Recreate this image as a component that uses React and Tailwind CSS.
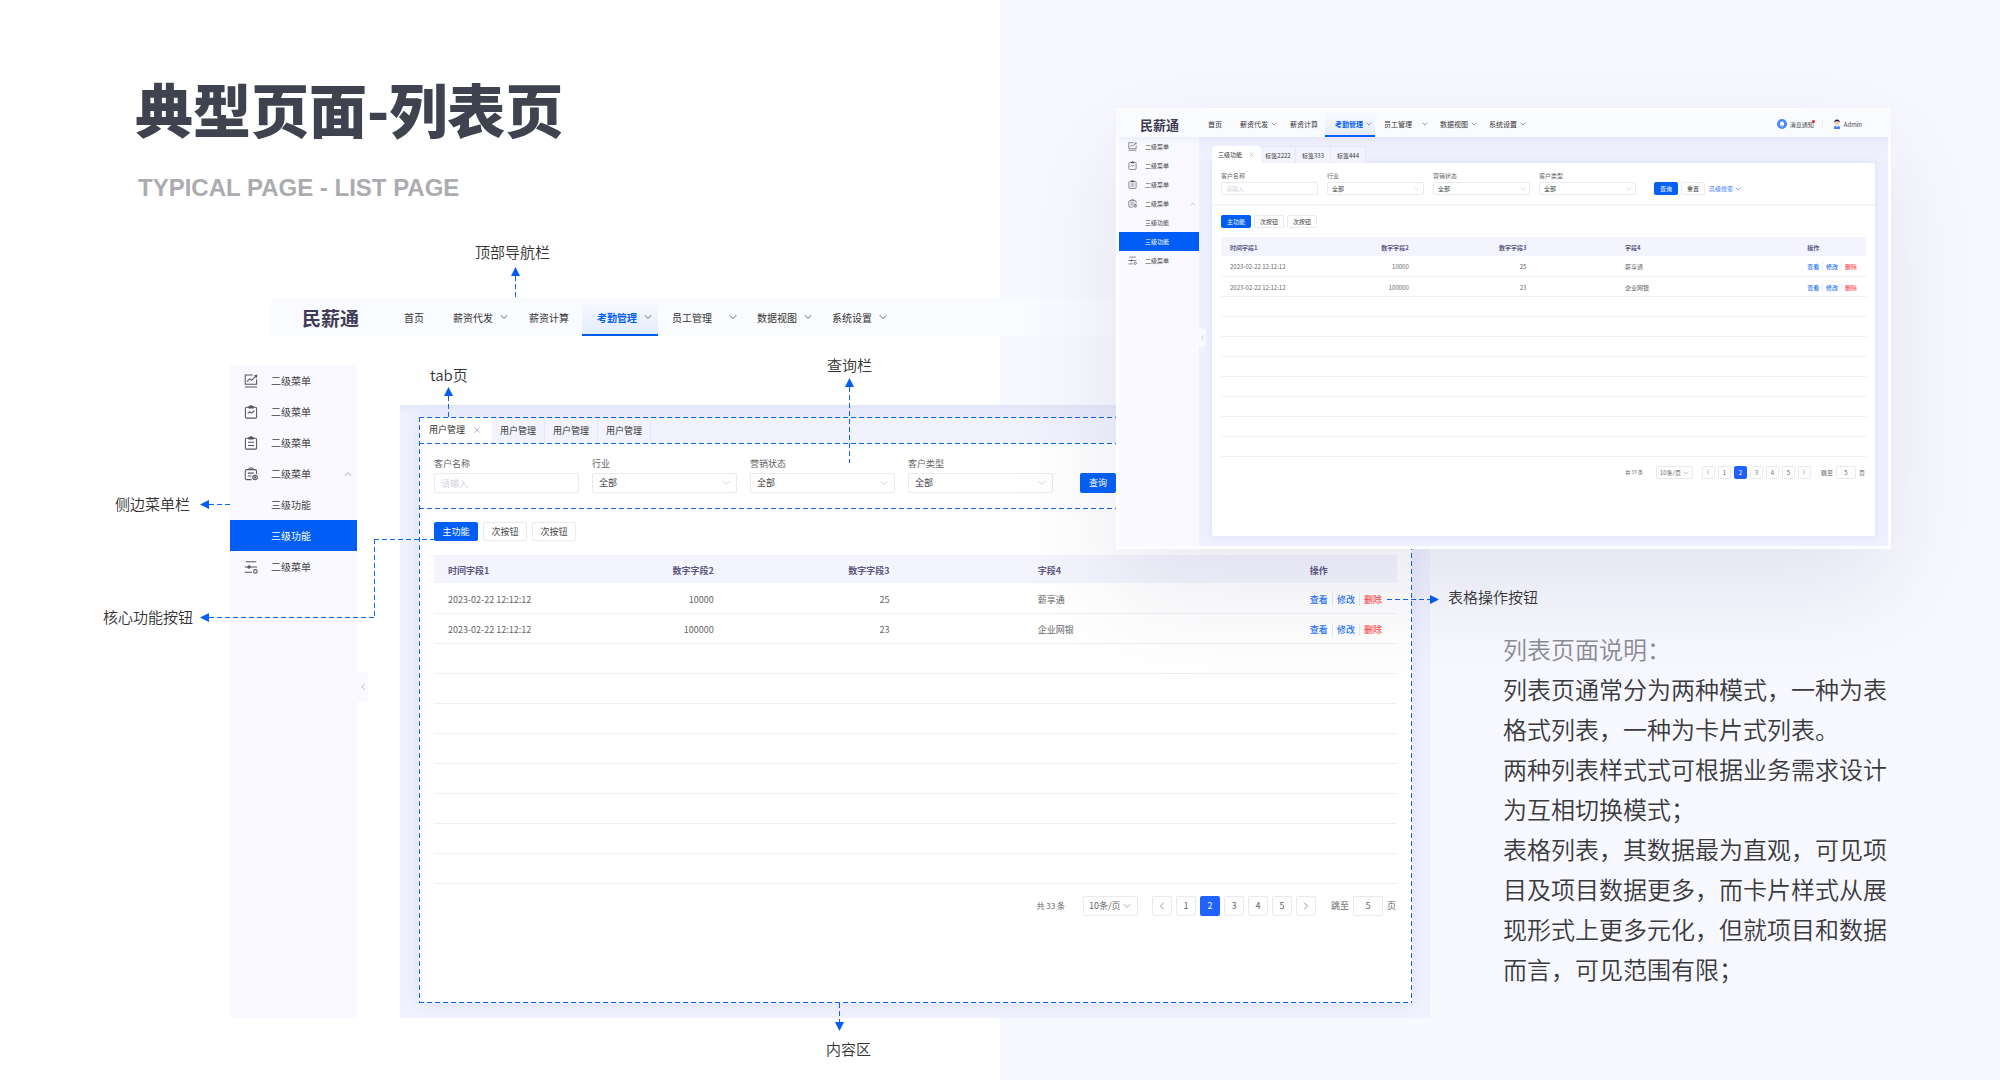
import { useId } from "react";
import { ChevronDown, ChevronUp, ChevronLeft, ChevronRight, X } from "lucide-react";
import clsx from "clsx";

// Two sizes of the same admin screen: the enlarged breakdown and the small preview window
const LARGE = {
  chevron: "h-[12px] w-[12px]",
  logo: "ml-[31px] w-[102px] text-[19px]",
  nav: "h-[38px] text-[10px]",
  navItems: ["", "ml-[29px]", "ml-[19px]", "ml-[13px] pl-[15px] pr-[4px]", "ml-[14px]", "ml-[18px]", "ml-[18px]"],
  navGap: "ml-[5px]",
  navWideGap: "ml-[15px]",
  menuRow: "h-[31px] pl-[14px] pr-[3px] text-[10px]",
  menuIcon: "mr-[13px] h-[14px] w-[14px]",
  handle: "top-[307px] h-[30px] w-[11px]",
  tabs: "h-[26px] text-[9px]",
  tab: "w-[53px]",
  tabActive: "w-[73px] gap-[7px]",
  close: "h-[10px] w-[10px]",
  query: "gap-[13px] px-[15px] pb-[16px] pt-[14px]",
  label: "text-[9px] leading-[14px] mb-[2px]",
  field: "w-[145px]",
  input: "h-[20px] px-[6px] text-[9px]",
  fieldChevron: "right-[5px] top-[4px] h-[12px] w-[12px]",
  search: "ml-[14px] h-[20px] w-[36px] text-[9px]",
  actions: "gap-[5px] px-[15px] pt-[13px]",
  button: "h-[19px] w-[44px] text-[9px]",
  tableWrap: "mt-[14px] px-[15px]",
  headRow: "h-[28px]",
  row: "h-[30px]",
  table: "text-[9px]",
  cell: "px-[14px] pt-[3px]",
  links: "gap-[4px]",
  pager: "mt-[12px] gap-[4px] px-[16px] pb-[87px] text-[9px]",
  total: "mr-[14px] text-[8px]",
  perPage: "mr-[10px] w-[55px]",
  perPageSelect: "h-[20px] pl-[5px] text-[9px]",
  pageButton: "h-[20px] w-[20px]",
  jump: "ml-[11px]",
  jumpInput: "h-[20px] w-[30px]",
};

const SMALL = {
  chevron: "h-[8px] w-[8px]",
  logo: "ml-[21px] w-[68px] text-[13px]",
  nav: "h-[26px] text-[7px]",
  navItems: ["", "ml-[18px]", "ml-[12px]", "ml-[7px] pl-[10px] pr-[2px]", "ml-[9px]", "ml-[11px]", "ml-[11px]"],
  navGap: "ml-[2px]",
  navWideGap: "ml-[9px]",
  menuRow: "h-[19px] pl-[9px] pr-[2px] text-[6px]",
  menuIcon: "mr-[8px] h-[9px] w-[9px]",
  handle: "top-[191px] h-[19px] w-[7px]",
  tabs: "h-[17px] text-[6px]",
  tab: "w-[35px]",
  tabActive: "w-[49px] gap-[6px]",
  close: "h-[7px] w-[7px]",
  query: "gap-[9px] border-b-2 border-[#f5f5f8] px-[9px] pb-[9px] pt-[8px]",
  label: "text-[6px] leading-[10px] mb-px",
  field: "w-[97px]",
  input: "h-[13px] px-[4px] text-[6px]",
  fieldChevron: "right-[3px] top-[3px] h-[8px] w-[8px]",
  search: "ml-[9px] h-[13px] w-[24px] text-[6px]",
  actions: "gap-[3px] px-[9px] pt-[9px]",
  button: "h-[13px] w-[30px] text-[6px]",
  tableWrap: "mt-[9px] px-[9px]",
  headRow: "h-[19px]",
  row: "h-[20px]",
  table: "text-[6px]",
  cell: "px-[9px] pt-[2px]",
  links: "gap-[3px]",
  pager: "mt-[9px] gap-[3px] px-[10px] pb-[57px] text-[6px]",
  total: "mr-[10px] text-[5px]",
  perPage: "mr-[6px] w-[37px]",
  perPageSelect: "h-[13px] pl-[3px] text-[6px]",
  pageButton: "h-[13px] w-[13px]",
  jump: "ml-[7px]",
  jumpInput: "h-[13px] w-[20px]",
};

const navItems = [
  { text: "首页" },
  { text: "薪资代发", arrow: true },
  { text: "薪资计算" },
  { text: "考勤管理", arrow: true, active: true },
  { text: "员工管理", arrow: true, wide: true },
  { text: "数据视图", arrow: true },
  { text: "系统设置", arrow: true },
];

const menuItems = [
  { text: "二级菜单", icon: "chart" },
  { text: "二级菜单", icon: "trend" },
  { text: "二级菜单", icon: "list" },
  { text: "二级菜单", icon: "config", open: true },
  { text: "三级功能" },
  { text: "三级功能", active: true },
  { text: "二级菜单", icon: "slider" },
];

const rows = [
  { time: "2023-02-22 12:12:12", a: "10000", b: "25", c: "薪享通" },
  { time: "2023-02-22 12:12:12", a: "100000", b: "23", c: "企业网银" },
];

const MenuIcon = ({ name, className }) => (
  <svg viewBox="0 0 16 16" fill="none" stroke="#55555c" strokeWidth="1.2" className={className}>
    {name === "chart" && (
      <>
        <path d="M10 1.2H1.4v10.6h13V6" />
        <path d="M1 14.8h14M3.4 8.6l3-3 2.4 1.6L13.6 2.4M11.6 2.2l3-.8-.6 3" />
      </>
    )}
    {(name === "trend" || name === "list") && (
      <>
        <rect x="1.6" y="2.6" width="12.8" height="12.4" rx="1.4" />
        <path d="M5.6 3.4V1.8h1.2L8 .6l1.2 1.2h1.2v1.6z" fill="#55555c" />
      </>
    )}
    {name === "trend" && <path d="M4.2 9.6l2.4-2 2 1.6 3.2-2.6" />}
    {name === "list" && <path d="M4.6 7.2h6.8M4.6 10.8h6.8" />}
    {name === "config" && (
      <>
        <path d="M8.6 14.4H3.4a2 2 0 0 1-2-2V5a2 2 0 0 1 2-2h9a2 2 0 0 1 2 2v3" />
        <path d="M5.2 3.2C5.4 1.6 6.4.8 8 .8s2.6.8 2.8 2.4M4.4 7H11M4.4 10.2h4" />
        <circle cx="12.6" cy="12" r="2.6" />
        <circle cx="12.6" cy="12" r=".7" />
      </>
    )}
    {name === "slider" && (
      <>
        <path d="M2 2h12M.8 8H15M.8 14h8.4" />
        <circle cx="5.8" cy="8" r="1.3" fill="#55555c" />
        <circle cx="13" cy="13" r="2" />
      </>
    )}
  </svg>
);

const BellIcon = () => (
  <svg viewBox="0 0 20 20" className="h-[10px] w-[10px]">
    <circle cx="10" cy="10" r="10" fill="#4a8af8" />
    <path d="M6 13V9a4 4 0 0 1 8 0v4z" fill="#fff" />
    <path d="M8.5 15.5h3" stroke="#fff" strokeWidth="1.5" />
  </svg>
);

const AvatarIcon = () => (
  <svg viewBox="0 0 16 20" className="h-[10px] w-[8px]">
    <path d="M2 20c-1-5 2-7 6-7s7 2 6 7z" fill="#3f83f8" />
    <path d="M6.5 12h3v3L8 16.5 6.5 15z" fill="#fff" />
    <circle cx="8" cy="8" r="4.5" fill="#f7cdbd" />
    <path d="M3 8C2 3 4 1 8 1s6 2 5 7c-1-3-2-3.5-5-3.5S4 5 3 8z" fill="#2b2233" />
  </svg>
);

const TopNav = ({ s, children }) => (
  <nav className={clsx("flex items-center bg-[#fafbff] text-[#333]", s.nav)}>
    <a href="#home" className={clsx("shrink-0 font-bold leading-none text-[#403c55]", s.logo)}>
      民薪通
    </a>
    {navItems.map((item, i) => (
      <a
        key={item.text}
        href="#nav"
        className={clsx(
          "flex h-full shrink-0 items-center whitespace-nowrap",
          s.navItems[i],
          item.active && "bg-linear-to-b from-[#fafbff] to-[#e3ebfd] shadow-[inset_0_-2px_0_#005df5]"
        )}
      >
        <span className={clsx(item.active && "font-bold text-[#005df5]")}>{item.text}</span>
        {item.arrow && (
          <ChevronDown
            strokeWidth={1.75}
            className={clsx("text-[#555]", s.chevron, item.wide ? s.navWideGap : s.navGap)}
          />
        )}
      </a>
    ))}
    {children}
  </nav>
);

const SideMenu = ({ s, className }) => (
  <aside className={clsx("relative shrink-0 bg-[#f9f9ff] text-[#444]", className)}>
    <ul>
      {menuItems.map((item, i) => (
        <li key={i}>
          <a href="#menu" className={clsx("flex items-center", s.menuRow, item.active && "bg-[#005df5] text-white")}>
            {item.icon ? <MenuIcon name={item.icon} className={s.menuIcon} /> : <span className={s.menuIcon} />}
            <span>{item.text}</span>
            {item.open && <ChevronUp className={clsx("ml-auto text-[#a9afd0]", s.chevron)} />}
          </a>
        </li>
      ))}
    </ul>
    <button
      type="button"
      aria-label="收起菜单"
      className={clsx("absolute left-full flex items-center justify-center rounded-r-sm bg-[#f9f9ff]", s.handle)}
    >
      <ChevronLeft className={clsx("shrink-0 text-[#a9a9cc]", s.close)} />
    </button>
  </aside>
);

const Tabs = ({ s, names }) => (
  <div className={clsx("flex text-[#333]", s.tabs)}>
    {names.map((name, i) => (
      <button
        key={i}
        type="button"
        className={clsx(
          "flex items-center justify-center whitespace-nowrap",
          i === 0 ? "rounded-t-sm bg-white" : "border-r border-t border-[#e6e8f6] bg-[#f2f3fe]",
          i === 0 ? s.tabActive : s.tab
        )}
      >
        {name}
        {i === 0 && <X className={clsx("text-[#a9afd0]", s.close)} />}
      </button>
    ))}
  </div>
);

const Field = ({ s, label, select }) => {
  const id = useId();

  return (
    <div className={clsx("relative shrink-0", s.field)}>
      <label htmlFor={id} className={clsx("block text-[#666]", s.label)}>
        {label}
      </label>
      {select ? (
        <div className="relative">
          <select
            id={id}
            className={clsx("block w-full appearance-none rounded-xs border border-[#e9e9f0] bg-white text-[#444]", s.input)}
          >
            <option>全部</option>
          </select>
          <ChevronDown
            strokeWidth={1.75}
            className={clsx("pointer-events-none absolute text-[#c3c7dc]", s.fieldChevron)}
          />
        </div>
      ) : (
        <input
          id={id}
          type="text"
          placeholder="请输入"
          className={clsx("block w-full rounded-xs border border-[#e9e9f0] bg-white placeholder:text-[#d3d4e2]", s.input)}
        />
      )}
    </div>
  );
};

const QueryForm = ({ s, children }) => (
  <form className={clsx("flex items-end", s.query)}>
    <Field s={s} label="客户名称" />
    <Field s={s} label="行业" select />
    <Field s={s} label="营销状态" select />
    <Field s={s} label="客户类型" select />
    <button type="button" className={clsx("shrink-0 rounded-xs bg-[#0560f5] text-white", s.search)}>
      查询
    </button>
    {children}
  </form>
);

const Actions = ({ s }) => (
  <div className={clsx("flex", s.actions)}>
    <button type="button" className={clsx("rounded-xs bg-[#005df5] text-white", s.button)}>
      主功能
    </button>
    {[1, 2].map((n) => (
      <button key={n} type="button" className={clsx("rounded-xs border border-[#e9e9f0] bg-white text-[#444]", s.button)}>
        次按钮
      </button>
    ))}
  </div>
);

const DataTable = ({ s }) => (
  <div className={s.tableWrap}>
    <table className={clsx("w-full table-fixed border-collapse text-[#666]", s.table)}>
      <colgroup>
        <col className="w-[18%]" />
        <col className="w-[12.5%]" />
        <col className="w-[18.25%]" />
        <col className="w-[12.5%]" />
        <col className="w-[28.25%]" />
        <col className="w-[10.5%]" />
      </colgroup>
      <thead>
        <tr className={clsx("bg-[#f4f4fe] text-left text-[#5d5780]", s.headRow)}>
          <th className={s.cell}>时间字段1</th>
          <th className={clsx("text-right", s.cell)}>数字字段2</th>
          <th className={clsx("text-right", s.cell)}>数字字段3</th>
          <th />
          <th className={s.cell}>字段4</th>
          <th className={s.cell}>操作</th>
        </tr>
      </thead>
      <tbody>
        {rows.map((row) => (
          <tr key={row.a} className={clsx("border-b border-[#f0f0f3]", s.row)}>
            <td className={clsx("whitespace-nowrap", s.cell)}>{row.time}</td>
            <td className={clsx("text-right", s.cell)}>{row.a}</td>
            <td className={clsx("text-right", s.cell)}>{row.b}</td>
            <td />
            <td className={s.cell}>{row.c}</td>
            <td className={s.cell}>
              <div className={clsx("flex whitespace-nowrap font-medium text-[#1f74f5]", s.links)}>
                <a href="#view">查看</a>
                <span className="w-px bg-[#e9eaf2]" />
                <a href="#edit">修改</a>
                <span className="w-px bg-[#e9eaf2]" />
                <a href="#delete" className="text-[#ff4d4f]">
                  删除
                </a>
              </div>
            </td>
          </tr>
        ))}
        {[...Array(8)].map((_, i) => (
          <tr key={i} className={clsx("border-b border-[#f0f0f3]", s.row)}>
            <td colSpan={6} />
          </tr>
        ))}
      </tbody>
    </table>
  </div>
);

const Pagination = ({ s }) => {
  const id = useId();
  const box = "flex items-center justify-center rounded-xs border border-[#e9e9f0]";

  return (
    <div className={clsx("flex items-center justify-end text-[#666]", s.pager)}>
      <span className={s.total}>共 33 条</span>
      <div className={clsx("relative", s.perPage)}>
        <select
          aria-label="每页条数"
          className={clsx("block w-full appearance-none rounded-xs border border-[#e9e9f0] bg-white", s.perPageSelect)}
        >
          <option>10条/页</option>
        </select>
        <ChevronDown
          strokeWidth={1.75}
          className={clsx("pointer-events-none absolute text-[#999]", s.fieldChevron)}
        />
      </div>
      <button type="button" aria-label="上一页" className={clsx(box, s.pageButton)}>
        <ChevronLeft strokeWidth={1.75} className={clsx("shrink-0 text-[#888]", s.chevron)} />
      </button>
      {[1, 2, 3, 4, 5].map((n) => (
        <button
          key={n}
          type="button"
          className={clsx(
            s.pageButton,
            n === 2 ? "flex items-center justify-center rounded-xs bg-[#1f62ff] text-white" : box
          )}
        >
          {n}
        </button>
      ))}
      <button type="button" aria-label="下一页" className={clsx(box, s.pageButton)}>
        <ChevronRight strokeWidth={1.75} className={clsx("shrink-0 text-[#888]", s.chevron)} />
      </button>
      <label htmlFor={id} className={s.jump}>
        跳至
      </label>
      <input
        id={id}
        type="text"
        defaultValue="5"
        className={clsx("rounded-xs border border-[#e9e9f0] text-center", s.jumpInput)}
      />
      <span>页</span>
    </div>
  );
};

// Dashed guide lines, one pixel thick
const DashX = ({ className }) => (
  <span
    className={clsx(
      "block h-px bg-[repeating-linear-gradient(90deg,#1062f0_0_5px,transparent_5px_8px)]",
      className
    )}
  />
);

const DashY = ({ className }) => (
  <span
    className={clsx("block w-px bg-[repeating-linear-gradient(180deg,#1062f0_0_5px,transparent_5px_8px)]", className)}
  />
);

const Arrow = ({ className }) => (
  <svg viewBox="0 0 10 10" className={clsx("h-[9px] w-[9px] shrink-0 fill-[#005df5]", className)}>
    <path d="M5 0l5 10H0z" />
  </svg>
);

const Note = ({ children }) => (
  <span className="whitespace-nowrap text-[15px] font-[350] leading-[20px] text-[#333]">{children}</span>
);

const Preview = () => (
  <section className="absolute right-[109px] top-[108px] z-10 w-[775px] border-[3px] border-white bg-[#eef0fe] shadow-[0_40px_100px_rgba(60,60,120,0.11)]">
    <div className="relative z-10 shadow-[0_2px_8px_rgba(120,130,220,0.12)]">
      <TopNav s={SMALL}>
        <div className="ml-auto flex h-full items-center pr-[26px] text-[6px] text-[#444]">
          <BellIcon />
          <span className="relative ml-[3px]">
            消息通知
            <i className="absolute -right-px top-0 h-[3px] w-[3px] rounded-full bg-[#f5222d]" />
          </span>
          <span className="ml-[8px] mr-[10px] h-[10px] w-px bg-[#eceef6]" />
          <AvatarIcon />
          <span className="ml-[3px]">Admin</span>
        </div>
      </TopNav>
    </div>
    <div className="flex">
      <SideMenu s={SMALL} className="w-[80px]" />
      <div className="min-w-0 flex-1 px-[13px] pb-[10px] pt-[9px]">
        <Tabs s={SMALL} names={["三级功能", "标签2222", "标签333", "标签444"]} />
        <div className="rounded-b-xs rounded-tr-xs bg-white shadow-[0_0_6px_rgba(120,130,200,0.15)]">
          <QueryForm s={SMALL}>
            <div className="-ml-[6px] flex items-center gap-[4px] text-[6px]">
              <button type="button" className="h-[13px] w-[24px] rounded-xs border border-[#e9e9f0] text-[#333]">
                重置
              </button>
              <a href="#more" className="flex items-center gap-px text-[#3a7bf7]">
                高级搜索
                <ChevronDown className="h-[8px] w-[8px]" />
              </a>
            </div>
          </QueryForm>
          <Actions s={SMALL} />
          <DataTable s={SMALL} />
          <Pagination s={SMALL} />
        </div>
      </div>
    </div>
  </section>
);

const Breakdown = () => (
  <div className="mt-[40px] min-w-0 flex-1 bg-[#f0f2fe] pb-[15px] pl-[19px] pr-[18px] pt-[12px] shadow-[inset_0_8px_10px_-6px_rgba(120,130,190,0.14)]">
    <div className="relative shadow-[0_0_14px_rgba(120,130,200,0.16)]">
      <Tabs s={LARGE} names={["用户管理", "用户管理", "用户管理", "用户管理"]} />
      <div className="relative bg-white">
        <QueryForm s={LARGE} />
        <Actions s={LARGE} />
        <DataTable s={LARGE} />
        <Pagination s={LARGE} />
        <DashX className="absolute inset-x-0 top-0" />
        <DashX className="absolute inset-x-0 top-[65px]" />
      </div>

      <DashX className="absolute inset-x-0 top-0" />
      <DashX className="absolute inset-x-0 bottom-0" />
      <DashY className="absolute inset-y-0 left-0" />
      <DashY className="absolute inset-y-0 right-0" />

      <div className="absolute left-[11px] top-[-52px] flex flex-col items-center">
        <Note>tab页</Note>
        <Arrow className="mt-[2px]" />
        <DashY className="h-[22px]" />
      </div>
      <div className="absolute left-[408px] top-[-62px] flex flex-col items-center">
        <Note>查询栏</Note>
        <Arrow className="mt-[3px]" />
        <DashY className="h-[76px]" />
      </div>
      <div className="absolute left-[407px] top-full flex flex-col items-start">
        <DashY className="ml-[13px] h-[19px]" />
        <Arrow className="mb-[8px] ml-[9px] rotate-180" />
        <Note>内容区</Note>
      </div>
      <div className="absolute left-[968px] top-[170px] flex items-start">
        <DashX className="mt-[12px] w-[43px]" />
        <Arrow className="mr-[9px] mt-[8px] rotate-90" />
        <Note>表格操作按钮</Note>
      </div>
    </div>
  </div>
);

const App = () => {
  return (
    <main
      lang="zh-CN"
      className="relative min-h-screen overflow-hidden bg-[linear-gradient(90deg,#fff_50%,#f8f8ff_50%)] pb-[60px] font-['Noto_Sans_CJK_SC','Noto_Sans',sans-serif]"
    >
      <header className="pl-[135px] pt-[68px]">
        <h1 className="text-[58px] font-black leading-[80px] text-[#3e434f]">典型页面-列表页</h1>
        <p className="mt-[24px] pl-[3px] font-['Liberation_Sans',sans-serif] text-[24px] font-bold leading-[32px] text-[#ababb0]">
          TYPICAL PAGE - LIST PAGE
        </p>
      </header>

      <div className="relative ml-[271px] mr-[570px] mt-[94px]">
        <TopNav s={LARGE} />
        <div className="absolute bottom-full left-[204px] flex flex-col items-center">
          <Note>顶部导航栏</Note>
          <Arrow className="ml-[5px] mt-[5px]" />
          <DashY className="ml-[5px] h-[22px]" />
        </div>
      </div>

      <div className="mt-[29px] flex pl-[230px] pr-[112px]">
        <div className="relative mr-[43px] flex">
          <SideMenu s={LARGE} className="w-[127px]" />
          <div className="absolute right-full top-[129px] flex items-center">
            <Note>侧边菜单栏</Note>
            <Arrow className="ml-[10px] -rotate-90" />
            <DashX className="w-[21px]" />
          </div>
          {/* Elbow line from the main button to its note */}
          <div className="absolute left-[-127px] top-[242px] flex items-center">
            <Note>核心功能按钮</Note>
            <Arrow className="ml-[7px] -rotate-90" />
            <DashX className="w-[165px]" />
          </div>
          <DashY className="absolute left-[144px] top-[174px] h-[78px]" />
          <DashX className="absolute left-[144px] top-[174px] z-10 w-[60px]" />
        </div>

        <Breakdown />

        <section className="ml-[73px] mt-[264px] w-[385px] shrink-0 text-[24px] font-[350] leading-[40px] text-[#3a3a3e]">
          <h2 className="text-[#8c8c93]">列表页面说明：</h2>
          <p>列表页通常分为两种模式，一种为表格式列表，一种为卡片式列表。</p>
          <p>两种列表样式式可根据业务需求设计为互相切换模式；</p>
          <p>表格列表，其数据最为直观，可见项目及项目数据更多，而卡片样式从展现形式上更多元化，但就项目和数据而言，可见范围有限；</p>
        </section>
      </div>

      <Preview />
    </main>
  );
};

export default App;
